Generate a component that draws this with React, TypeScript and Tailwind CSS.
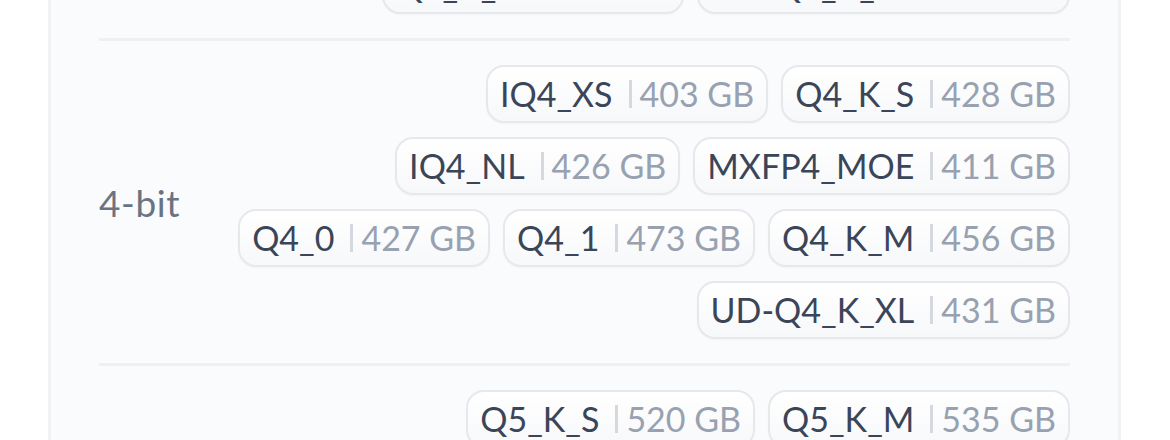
type Quant = { name: string; size: string };

const sections: { label: string; quants: Quant[] }[] = [
  {
    label: "3-bit",
    quants: [
      { name: "Q3_K_S", size: "325 GB" },
      { name: "IQ3_XXS", size: "301 GB" },
      { name: "Q3_K_M", size: "366 GB" },
      { name: "UD-Q3_K_XL", size: "349 GB" },
    ],
  },
  {
    label: "4-bit",
    quants: [
      { name: "IQ4_XS", size: "403 GB" },
      { name: "Q4_K_S", size: "428 GB" },
      { name: "IQ4_NL", size: "426 GB" },
      { name: "MXFP4_MOE", size: "411 GB" },
      { name: "Q4_0", size: "427 GB" },
      { name: "Q4_1", size: "473 GB" },
      { name: "Q4_K_M", size: "456 GB" },
      { name: "UD-Q4_K_XL", size: "431 GB" },
    ],
  },
  {
    label: "5-bit",
    quants: [
      { name: "Q5_K_S", size: "520 GB" },
      { name: "Q5_K_M", size: "535 GB" },
      { name: "UD-Q5_K_XL", size: "517 GB" },
    ],
  },
];

function QuantChip({ q }: { q: Quant }) {
  return (
    <div className="flex h-[58px] items-center rounded-[18px] border-2 border-[#e6e8ec] bg-linear-to-b from-white to-[#f7f8fa] px-[12px] shadow-[0_1px_2px_rgba(0,0,0,0.03)]">
      <span className="text-[#3a4558]">{q.name}</span>
      <span className="ml-[16px] mr-[8px] h-[28px] w-[3px] bg-[#d5d8de]" />
      <span className="text-[#98a1b0]">{q.size}</span>
    </div>
  );
}

export default function App() {
  return (
    <div className="h-[440px] w-[1170px] overflow-hidden bg-white font-['Lato',sans-serif] text-[34px] leading-none">
      <div className="-mt-[143px] ml-[48px] w-[1073px] rounded-[24px] border-[3px] border-[#f1f2f5] bg-[#fafbfc] px-[48px]">
        <div className="divide-y-[3px] divide-[#eef0f3]">
          {sections.map((s) => (
            <div key={s.label} className="flex items-center py-[24px]">
              <div className="w-[130px] shrink-0 text-[37px] tracking-[0.6px] text-[#6b7383]">{s.label}</div>
              <div className="flex flex-1 flex-wrap justify-end gap-x-[13px] gap-y-[14px] pl-[4px]">
                {s.quants.map((q) => (
                  <QuantChip key={q.name} q={q} />
                ))}
              </div>
            </div>
          ))}
        </div>
      </div>
    </div>
  );
}
